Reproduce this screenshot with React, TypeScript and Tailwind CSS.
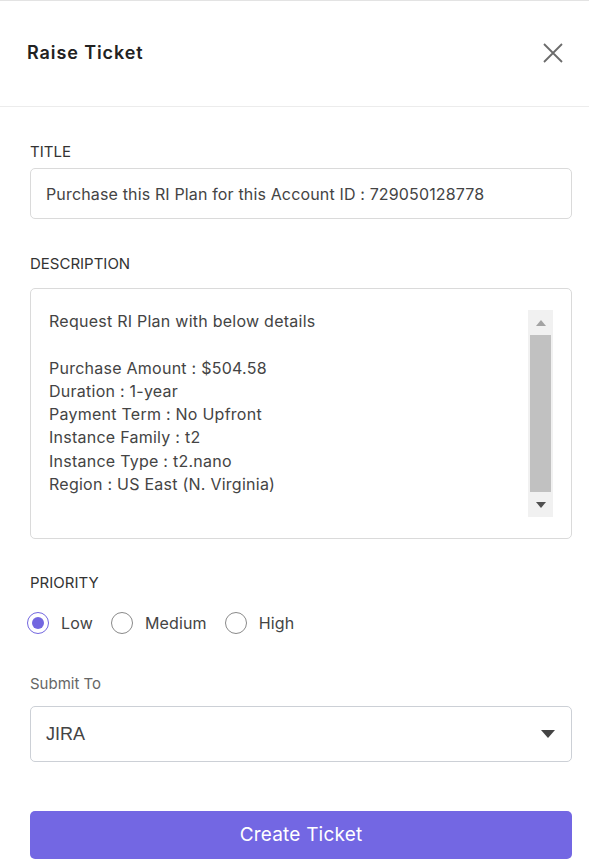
import React from "react";

const font = { fontFamily: "Inter, 'Noto Sans', sans-serif" };

function Radio({ label, checked }: { label: string; checked?: boolean }) {
  return (
    <label className="flex items-center gap-[12px]">
      <span
        className={
          checked
            ? "w-[22px] h-[22px] rounded-full border border-[#7367e0] flex items-center justify-center"
            : "w-[22px] h-[22px] rounded-full border border-[#8a8a8a] flex items-center justify-center"
        }
      >
        {checked && <span className="w-[12px] h-[12px] rounded-full bg-[#7367e0]" />}
      </span>
      <span className="text-[16px] tracking-[0.15px] text-[#444]">{label}</span>
    </label>
  );
}

export default function App() {
  const lines = [
    "Request RI Plan with below details",
    "",
    "Purchase Amount : $504.58",
    "Duration : 1-year",
    "Payment Term : No Upfront",
    "Instance Family : t2",
    "Instance Type : t2.nano",
    "Region : US East (N. Virginia)",
  ];
  return (
    <div className="w-[589px] h-[868px] bg-white border-t border-[#e3e3e3] overflow-hidden" style={font}>
      <div className="h-[106px] border-b border-[#ececec] flex items-center justify-between pl-[27px] pr-[26px]">
        <h2 className="text-[18px] tracking-[0.9px] font-semibold text-[#222] mt-[-2px]">Raise Ticket</h2>
        <svg width="20" height="20" viewBox="0 0 20 20" className="mt-[-2px]">
          <path d="M1 1 L19 19 M19 1 L1 19" stroke="#6b6b6b" strokeWidth="1.8" fill="none" />
        </svg>
      </div>
      <div className="pl-[30px] pr-[17px] pt-[35px] flex flex-col">
        <div className="text-[15px] text-[#333] leading-[20px]">TITLE</div>
        <div className="mt-[6px] h-[51px] border border-[#dadada] rounded-[5px] flex items-center pl-[15px] text-[16px] tracking-[0.15px] text-[#444]">
          Purchase this RI Plan for this Account ID : 729050128778
        </div>
        <div className="mt-[35px] text-[15px] text-[#333] leading-[20px]">DESCRIPTION</div>
        <div className="mt-[14px] h-[251px] border border-[#dadada] rounded-[5px] flex pl-[18px] pr-[18px] pt-[21px]">
          <div className="flex-1 text-[16px] tracking-[0.25px] text-[#444] leading-[23.3px]">
            {lines.map((l, i) => (
              <div key={i} className="h-[23.3px]">{l}</div>
            ))}
          </div>
          <div className="w-[25px] h-[207px] bg-[#f1f1f1] flex flex-col items-center">
            <div className="h-[25px] flex items-center justify-center">
              <svg width="10" height="6" viewBox="0 0 10 6"><path d="M0 6 L5 0 L10 6 Z" fill="#a3a3a3" /></svg>
            </div>
            <div className="w-[21px] flex-1 bg-[#c1c1c1]" />
            <div className="h-[25px] flex items-center justify-center">
              <svg width="10" height="6" viewBox="0 0 10 6"><path d="M0 0 L5 6 L10 0 Z" fill="#505050" /></svg>
            </div>
          </div>
        </div>
        <div className="mt-[34px] text-[15px] text-[#333] leading-[20px]">PRIORITY</div>
        <div className="mt-[18px] flex items-center gap-[18px] ml-[-3px]">
          <Radio label="Low" checked />
          <Radio label="Medium" />
          <Radio label="High" />
        </div>
        <div className="mt-[39px] text-[15px] text-[#666] leading-[20px]">Submit To</div>
        <div
          className="mt-[12px] h-[56px] border border-[#ccd0d6] rounded-[5px] flex items-center justify-between pl-[15px] pr-[16px] text-[18px] text-[#444]"
          style={{ fontFamily: "'Liberation Sans', Arial, sans-serif" }}
        >
          <span>JIRA</span>
          <svg width="14" height="8" viewBox="0 0 14 8"><path d="M0 0 L7 8 L14 0 Z" fill="#444" /></svg>
        </div>
        <button className="mt-[49px] h-[48px] rounded-[5px] bg-[#7367e3] text-white text-[19px] tracking-[0.2px] flex items-center justify-center">
          Create Ticket
        </button>
      </div>
    </div>
  );
}
